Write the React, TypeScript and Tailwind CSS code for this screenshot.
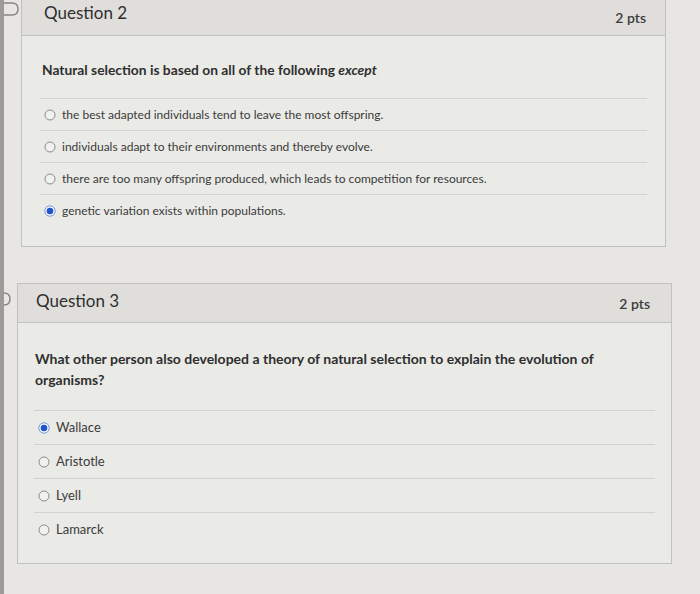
const q2Options = [
  { label: "the best adapted individuals tend to leave the most offspring.", checked: false },
  { label: "individuals adapt to their environments and thereby evolve.", checked: false },
  { label: "there are too many offspring produced, which leads to competition for resources.", checked: false },
  { label: "genetic variation exists within populations.", checked: true },
];

const q3Options = [
  { label: "Wallace", checked: true },
  { label: "Aristotle", checked: false },
  { label: "Lyell", checked: false },
  { label: "Lamarck", checked: false },
];

function Radio({ checked }: { checked: boolean }) {
  return (
    <svg width="12" height="12" viewBox="0 0 12 12" className="shrink-0">
      {checked ? (
        <>
          <circle cx="6" cy="6" r="5.2" fill="#f4f6fb" stroke="#7d98d4" strokeWidth="1" />
          <circle cx="6" cy="6" r="3.3" fill="#1d55c9" />
        </>
      ) : (
        <circle cx="6" cy="6" r="5" fill="#f1f1ef" stroke="#8c8c8a" strokeWidth="1" />
      )}
    </svg>
  );
}

function Flag({ className }: { className: string }) {
  return (
    <svg width="20" height="14" viewBox="0 0 20 14" className={className}>
      <path d="M1 1 H12 Q18 1 18 7 Q18 13 12 13 H1 Z" fill="none" stroke="#858582" strokeWidth="1.4" />
    </svg>
  );
}

export default function App() {
  return (
    <div
      className="w-[700px] h-[594px] overflow-hidden bg-[#e7e6e3] border-l-4 border-[#9c9b98] text-[#333] flex flex-col"
      style={{ fontFamily: "Lato, 'Open Sans', sans-serif" }}
    >
      {/* question 2 */}
      <div className="flex">
        <div className="w-[17px] relative shrink-0">
          <Flag className="absolute -left-[4px] top-[2px]" />
        </div>
        <div className="w-[645px] mt-[-3px] border border-[#c3c2bf] bg-[#eaeae7]">
          <div className="h-[38px] bg-[#dfdedb] border-b border-[#c3c2bf] flex items-start justify-between pl-[22px] pr-[19px]">
            <span className="text-[17px] leading-[20px] pt-[5px] text-[#2e2e2e]">Question 2</span>
            <span className="text-[14px] leading-[16px] pt-[12px] font-semibold text-[#3a3a3a]">2 pts</span>
          </div>
          <div className="px-[18px] pt-[25px] pb-[20px]">
            <p className="text-[13.8px] leading-[17px] font-bold text-[#2f2f2f] pl-[2px]">
              Natural selection is based on all of the following <em>except</em>
            </p>
            <div className="mt-[20px]">
              {q2Options.map((o) => (
                <div key={o.label} className="h-[32px] border-t border-[#d3d2ce] flex items-center gap-[6px] pl-[4px]">
                  <Radio checked={o.checked} />
                  <span className="text-[12px] text-[#3b3b3b]">{o.label}</span>
                </div>
              ))}
            </div>
          </div>
        </div>
      </div>

      {/* question 3 */}
      <div className="flex mt-[36px]">
        <div className="w-[13px] relative shrink-0">
          <Flag className="absolute -left-[12px] top-[9px]" />
        </div>
        <div className="w-[655px] border border-[#c3c2bf] bg-[#eaeae7]">
          <div className="h-[39px] bg-[#dfdedb] border-b border-[#c3c2bf] flex items-start justify-between pl-[18px] pr-[21px]">
            <span className="text-[17px] leading-[20px] pt-[7px] text-[#2e2e2e]">Question 3</span>
            <span className="text-[14px] leading-[16px] pt-[12px] font-semibold text-[#3a3a3a]">2 pts</span>
          </div>
          <div className="px-[16px] pt-[25px] pb-[17px]">
            <p className="text-[14px] leading-[21px] font-bold text-[#2f2f2f] pl-[1px] pr-[45px]">
              What other person also developed a theory of natural selection to explain the evolution of organisms?
            </p>
            <div className="mt-[20px]">
              {q3Options.map((o) => (
                <div key={o.label} className="h-[34px] border-t border-[#d3d2ce] flex items-center gap-[6px] pl-[4px]">
                  <Radio checked={o.checked} />
                  <span className="text-[13px] text-[#3b3b3b]">{o.label}</span>
                </div>
              ))}
            </div>
          </div>
        </div>
      </div>
    </div>
  );
}
